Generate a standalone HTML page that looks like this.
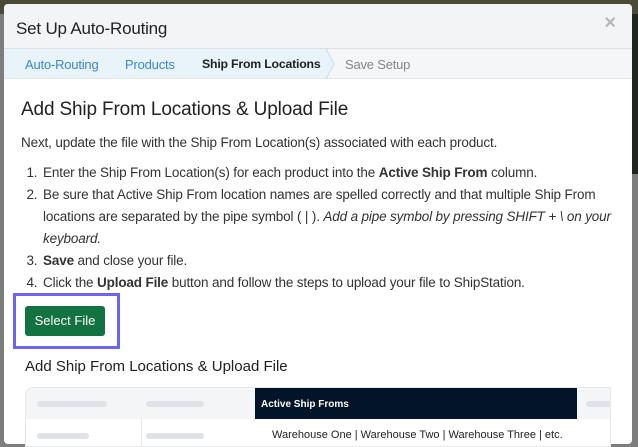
<!DOCTYPE html>
<html><head><meta charset="utf-8"><style>
*{margin:0;padding:0;box-sizing:border-box}
body{width:638px;height:438px;overflow:hidden;background:#7d7d7d;font-family:"Liberation Sans",sans-serif;position:relative}
.topstrip{position:absolute;left:0;top:0;width:638px;height:14px;background:#4a4a36}
.rightdark{position:absolute;right:0;top:14px;width:8px;height:160px;background:#1e261e}
.modal{position:absolute;left:4px;top:4px;width:628px;height:440px;background:#fff;border-radius:4px;overflow:hidden}
.hdr{height:45px;background:#f3f4f6;border-bottom:1px solid #dde1e5;position:relative}
.hdr h1{font-weight:normal;font-size:17px;color:#222;position:absolute;left:12px;top:15px;letter-spacing:-0.2px}
.close{position:absolute;right:16px;top:8px;font-size:20px;color:#b3b6ba;font-weight:bold}
.steps{height:30px;background:#f5f6f8;border-bottom:1px solid #e3e6e9;position:relative;font-size:13px;letter-spacing:-0.2px}
.steps .blue{position:absolute;left:0;top:0;width:324px;height:29px;background:#e8f3fa}
.steps svg{position:absolute;left:322px;top:0}
.steps span{position:absolute;top:8px}
.c{position:absolute;left:21px;top:93px;width:600px;color:#333;letter-spacing:-0.15px}
h2{font-weight:normal;font-size:19px;color:#222}
p{font-size:13.5px;margin-top:14px}
ol{font-size:13.5px;line-height:22px;margin-top:12px;padding-left:20px}
ol li{padding-left:2px}
.btnbox{position:absolute;left:13px;top:293px;width:107px;height:56px;border:3px solid #6b63f2}
.btn{position:absolute;left:25px;top:306px;width:80px;height:30px;background:#137340;color:#fff;border-radius:3px;font-size:13px;text-align:center;line-height:30px}
h3{position:absolute;left:25px;top:358px;font-weight:normal;font-size:15px;color:#222}
.tbl{position:absolute;left:25px;top:387px;width:586px;height:60px;border:1px solid #e6e8eb;border-radius:8px 0 0 0;background:#fff;overflow:hidden}
.th{position:absolute;left:0;top:0;width:586px;height:31px;background:#f4f5f7}
.bar{position:absolute;height:6px;background:#dfe2e6;border-radius:3px}
.dark{position:absolute;left:229px;top:0;width:322px;height:31px;background:#011428;color:#fff;font-size:10px;font-weight:bold;padding:11px 0 0 6px}
</style></head><body>
<div class="topstrip"></div><div class="rightdark"></div>
<div class="modal">
<div class="hdr"><h1>Set Up Auto-Routing</h1><div class="close">×</div></div>
<div class="steps"><div class="blue"></div>
<svg width="10" height="30"><path d="M0 0 L8 15 L0 30" fill="#e8f3fa" stroke="#bcdff3" stroke-width="1"/></svg>
<span style="left:21px;color:#3a86de">Auto-Routing</span>
<span style="left:121px;color:#3a86de">Products</span>
<span style="left:198px;color:#222;font-weight:bold;font-size:12.3px">Ship From Locations</span>
<span style="left:341px;color:#80868c">Save Setup</span>
</div>
</div>
<div class="c">
<h2 style="margin-top:6px">Add Ship From Locations &amp; Upload File</h2>
<p>Next, update the file with the Ship From Location(s) associated with each product.</p>
<ol>
<li>Enter the Ship From Location(s) for each product into the <b>Active Ship From</b> column.</li>
<li>Be sure that Active Ship From location names are spelled correctly and that multiple Ship From locations are separated by the pipe symbol ( | ). <i>Add a pipe symbol by pressing SHIFT + \ on your keyboard.</i></li>
<li><b>Save</b> and close your file.</li>
<li>Click the <b>Upload File</b> button and follow the steps to upload your file to ShipStation.</li>
</ol>
</div>
<div class="btnbox"></div>
<div class="btn">Select File</div>
<h3>Add Ship From Locations &amp; Upload File</h3>
<div class="tbl">
<div class="th"></div>
<div class="bar" style="left:11px;top:13px;width:70px"></div>
<div class="bar" style="left:120px;top:13px;width:58px"></div>
<div class="bar" style="left:560px;top:13px;width:40px"></div>
<div class="dark">Active Ship Froms</div>
<div style="position:absolute;left:115px;top:31px;width:1px;height:30px;background:#e6e8eb"></div>
<div class="bar" style="left:11px;top:45px;width:52px"></div>
<div class="bar" style="left:120px;top:45px;width:58px"></div>
<div style="position:absolute;left:246px;top:41px;font-size:11px;color:#222">Warehouse One | Warehouse Two | Warehouse Three | etc.</div>
</div>
</body></html>
